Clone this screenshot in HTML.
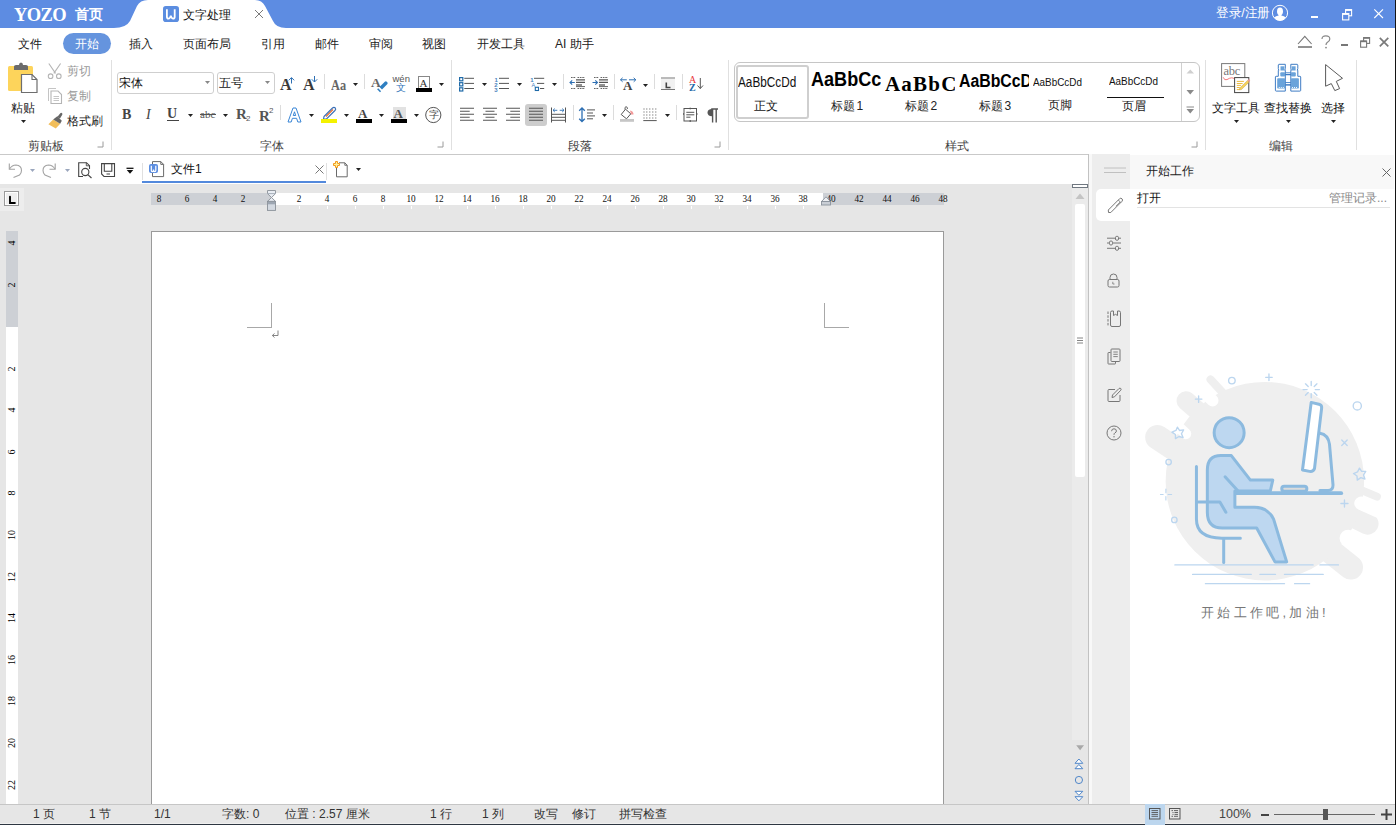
<!DOCTYPE html>
<html><head><meta charset="utf-8">
<style>
*{box-sizing:border-box}
html,body{margin:0;padding:0;width:1396px;height:825px;overflow:hidden;background:#fff;font-family:"Liberation Sans",sans-serif;font-size:12px;color:#222}
.a{position:absolute}
.t{position:absolute;white-space:nowrap;line-height:1}
svg{position:absolute;overflow:visible}
.st{top:808px;font-size:12px;color:#333}
.rn{top:194px;width:20px;text-align:center;font-family:"Liberation Serif",serif;font-size:10px;color:#111;transform:scaleX(0.92)}
.vn{left:2px;width:20px;text-align:center;font-family:"Liberation Serif",serif;font-size:10px;color:#000;transform:rotate(-90deg);height:20px;line-height:20px}
</style></head><body>
<!-- TITLE BAR -->
<div class="a" style="left:0;top:0;width:1396px;height:28px;background:#5d8ce2"></div>
<svg style="left:0;top:0" width="400" height="28"><path d="M114 28 Q126 28 130 21 L137 6 Q140 0 148 0 L255 0 Q262 0 265 6 L273 21 Q276 28 286 28 Z" fill="#fff"/></svg>
<div class="t" style="left:14px;top:6px;font-family:'Liberation Serif',serif;font-weight:bold;font-size:18.5px;color:#fff;letter-spacing:-0.6px">YOZO</div>
<div class="t" style="left:75px;top:7px;font-size:14px;color:#fff;font-weight:bold">首页</div>
<svg style="left:163px;top:6px" width="16" height="16"><rect x="0" y="0" width="16" height="16" rx="2.8" fill="#5b8de0"/><path d="M3.9 3.2 V10.8 Q3.9 12.7 5.5 12.7 Q7 12.7 7.8 9.6 Q8.6 12.7 10.1 12.7 Q11.7 12.7 11.7 10.8 V3.2" fill="none" stroke="#fff" stroke-width="1.8"/></svg>
<div class="t" style="left:182.5px;top:9px;font-size:12px;color:#111">文字处理</div>
<svg style="left:255px;top:10px" width="9" height="9"><path d="M0 0L8 8M8 0L0 8" stroke="#7a7a7a" stroke-width="1"/></svg>
<div class="t" style="left:1215.5px;top:6px;font-size:13px;color:#fff;transform:scaleX(0.97);transform-origin:0 0">登录/注册</div>
<svg style="left:1272px;top:5px" width="16" height="16"><circle cx="8" cy="7.9" r="7.6" fill="none" stroke="#fff" stroke-width="1"/><ellipse cx="8" cy="6.3" rx="3" ry="3.9" fill="#fff"/><path d="M2 12.6 Q4 11 6.6 10.6 L6.6 8.5 H9.4 V10.6 Q12 11 14 12.6 Q11.6 15.6 8 15.6 Q4.4 15.6 2 12.6Z" fill="#fff"/></svg>
<div class="a" style="left:1311px;top:16px;width:7.2px;height:2px;background:#fff"></div>
<svg style="left:1342px;top:9px" width="11" height="12"><rect x="3.6" y="0.6" width="6" height="6.2" fill="none" stroke="#fff" stroke-width="1.1"/><path d="M3.6 1.1H9.6" stroke="#fff" stroke-width="1.6"/><rect x="0.6" y="4.6" width="6.2" height="6.3" fill="#5d8ce2" stroke="#fff" stroke-width="1.1"/><path d="M0.6 5.1H6.8" stroke="#fff" stroke-width="1.6"/></svg>
<svg style="left:1374px;top:9px" width="10" height="10"><path d="M0.3 0.3L9 9M9 0.3L0.3 9" stroke="#fff" stroke-width="1.1"/></svg>

<!-- MENU -->
<div class="a" style="left:63px;top:33px;width:48px;height:21px;background:#6594de;border-radius:11px"></div>
<div class="t" style="left:18px;top:37.5px">文件</div>
<div class="t" style="left:75px;top:37.5px;color:#fff">开始</div>
<div class="t" style="left:129px;top:37.5px">插入</div>
<div class="t" style="left:183px;top:37.5px">页面布局</div>
<div class="t" style="left:261px;top:37.5px">引用</div>
<div class="t" style="left:315px;top:37.5px">邮件</div>
<div class="t" style="left:369px;top:37.5px">审阅</div>
<div class="t" style="left:422px;top:37.5px">视图</div>
<div class="t" style="left:477px;top:37.5px">开发工具</div>
<div class="t" style="left:555px;top:37.5px">AI 助手</div>


<!-- CLIPBOARD GROUP -->
<svg style="left:8px;top:62px" width="32" height="32">
 <rect x="0" y="4" width="25" height="25" rx="1.5" fill="#fdd45b"/>
 <path d="M6 8 V4.5 Q6 3 8 3 H11 Q11 0.5 13 0.5 Q15 0.5 15 3 H18 Q20 3 20 4.5 V8Z" fill="#6b6b6b"/>
 <path d="M13.5 12.5 H24 L29 17.5 V30.5 H13.5Z" fill="#fff" stroke="#6e6e6e" stroke-width="1.2"/>
 <path d="M24 12.5 V17.5 H29" fill="none" stroke="#6e6e6e" stroke-width="1.1"/>
</svg>
<div class="t" style="left:11px;top:102px;font-size:12px">粘贴</div>
<svg style="left:21px;top:120px" width="6" height="4"><path d="M0 0H5L2.5 3Z" fill="#222"/></svg>
<svg style="left:48px;top:63px" width="15" height="16">
 <path d="M0.8 0.5 L7.6 10.4 M12.6 0.5 L5.8 10.4" stroke="#b5b5b5" stroke-width="1.1" fill="none"/>
 <circle cx="2.6" cy="13.2" r="2.3" fill="none" stroke="#b5b5b5" stroke-width="1.1"/>
 <circle cx="10.8" cy="13.2" r="2.3" fill="none" stroke="#b5b5b5" stroke-width="1.1"/>
</svg>
<div class="t" style="left:67px;top:65px;color:#9a9a9a">剪切</div>
<svg style="left:48px;top:88px" width="15" height="16">
 <path d="M0.5 13 V0.5 H8" fill="none" stroke="#c4c4c4" stroke-width="1"/>
 <path d="M3 3 H10 L13.5 6.5 V15.5 H3Z" fill="#fff" stroke="#b5b5b5" stroke-width="1.1"/>
 <path d="M5.5 8.5H11 M5.5 10.5H11 M5.5 12.5H11" stroke="#c0c0c0" stroke-width="0.9"/>
</svg>
<div class="t" style="left:67px;top:90px;color:#9a9a9a">复制</div>
<svg style="left:48px;top:112px" width="16" height="18">
 <path d="M0.4 12.2 L5.2 7.4 L12.2 11.8 L7.8 16.6 Z" fill="#f2be5a"/>
 <path d="M5.2 7.4 L9.3 4.3 L13.8 8.8 L12.2 11.8 Z" fill="#666"/>
 <path d="M9.3 5 L12.3 1.2 Q13.3 0.4 14.1 1.2 Q14.8 2 14.1 2.9 L12 6.6 Z" fill="#666"/>
</svg>
<div class="t" style="left:67px;top:115px;color:#222">格式刷</div>
<div class="t" style="left:28px;top:140px;color:#444">剪贴板</div>
<svg style="left:97px;top:141px" width="7" height="7"><path d="M6 0.5V6H0.5" fill="none" stroke="#9a9a9a" stroke-width="1"/></svg>
<div class="a" style="left:111px;top:60px;width:1px;height:90px;background:#e0e0e0"></div>

<!-- FONT GROUP -->
<div class="a" style="left:117px;top:72px;width:97px;height:22px;border:1px solid #cfcfcf;border-radius:3px;background:#fff"></div>
<div class="t" style="left:119px;top:77px;color:#111">宋体</div>
<svg style="left:205px;top:81px" width="6" height="4"><path d="M0 0H5L2.5 3Z" fill="#888"/></svg>
<div class="a" style="left:217px;top:72px;width:58px;height:22px;border:1px solid #cfcfcf;border-radius:3px;background:#fff"></div>
<div class="t" style="left:219px;top:77px;color:#111">五号</div>
<svg style="left:265px;top:81px" width="6" height="4"><path d="M0 0H5L2.5 3Z" fill="#888"/></svg>

<div class="t" style="left:280px;top:77.3px;font-family:'Liberation Serif',serif;font-weight:bold;font-size:16px;color:#3a3a3a">A</div>
<svg style="left:288px;top:76.5px" width="8" height="8"><path d="M3.5 6.5V0.8 M0.8 3.3L3.5 0.6L6.2 3.3" fill="none" stroke="#2d6fb3" stroke-width="1"/></svg>
<div class="t" style="left:303px;top:77.3px;font-family:'Liberation Serif',serif;font-weight:bold;font-size:16px;color:#3a3a3a">A</div>
<svg style="left:311px;top:76px" width="8" height="8"><path d="M3.5 0V5.8 M0.8 3.3L3.5 6L6.2 3.3" fill="none" stroke="#2d6fb3" stroke-width="1"/></svg>
<div class="a" style="left:324px;top:74px;width:1px;height:15px;background:#dcdcdc"></div>
<div class="t" style="left:331px;top:77.5px;font-family:'Liberation Serif',serif;font-weight:bold;font-size:14.5px;color:#666;transform:scaleX(0.85);transform-origin:0 0">Aa</div>
<svg style="left:353px;top:83px" width="6" height="4"><path d="M0 0H5L2.5 3Z" fill="#222"/></svg>
<div class="a" style="left:364px;top:74px;width:1px;height:15px;background:#dcdcdc"></div>
<div class="t" style="left:371px;top:76px;font-family:'Liberation Serif',serif;font-weight:bold;font-size:13.5px;color:#666">A</div>
<svg style="left:375px;top:79px" width="13" height="13"><path d="M4.5 8 L9.8 2.7 Q10.8 1.7 11.8 2.7 L12.3 3.2 Q13.2 4.2 12.2 5.2 L7 10.4Z" fill="#2f7fc1"/><path d="M3.2 9.3 L6.1 12.2 L5 13.2 L2.1 10.3Z" fill="#2f7fc1"/></svg>
<div class="t" style="left:392.5px;top:74.3px;font-size:9.5px;color:#555">wén</div>
<div class="t" style="left:396px;top:82.8px;font-size:10px;color:#2f73b8">文</div>
<div class="a" style="left:418px;top:76px;width:12px;height:13px;border:1px solid #888"></div>
<div class="t" style="left:419.5px;top:78px;font-family:'Liberation Serif',serif;font-size:11px;color:#333">A</div>
<div class="a" style="left:415.5px;top:88px;width:16px;height:4px;background:#000"></div>
<svg style="left:439px;top:83px" width="6" height="4"><path d="M0 0H5L2.5 3Z" fill="#222"/></svg>

<div class="t" style="left:122px;top:108px;font-family:'Liberation Serif',serif;font-weight:bold;font-size:14px;color:#444">B</div>
<div class="t" style="left:146px;top:108px;font-family:'Liberation Serif',serif;font-style:italic;font-size:14px;color:#444">I</div>
<div class="t" style="left:167px;top:107px;font-family:'Liberation Serif',serif;font-weight:bold;font-size:14px;color:#444">U</div>
<div class="a" style="left:166.5px;top:120px;width:12px;height:1px;background:#444"></div>
<svg style="left:188px;top:114px" width="6" height="4"><path d="M0 0H5L2.5 3Z" fill="#222"/></svg>
<div class="t" style="left:200px;top:109px;font-family:'Liberation Serif',serif;font-size:11px;color:#555">abc</div>
<div class="a" style="left:200px;top:114px;width:16px;height:1px;background:#555"></div>
<svg style="left:223px;top:114px" width="6" height="4"><path d="M0 0H5L2.5 3Z" fill="#222"/></svg>
<div class="t" style="left:236px;top:107px;font-family:'Liberation Serif',serif;font-weight:bold;font-size:15px;color:#555">R</div>
<div class="t" style="left:246px;top:115px;font-family:'Liberation Sans',sans-serif;font-size:8px;color:#555">2</div>
<div class="t" style="left:259px;top:109px;font-family:'Liberation Serif',serif;font-weight:bold;font-size:15px;color:#555">R</div>
<div class="t" style="left:269px;top:107px;font-family:'Liberation Sans',sans-serif;font-size:8px;color:#555">2</div>
<div class="a" style="left:280px;top:105px;width:1px;height:15px;background:#dcdcdc"></div>

<svg style="left:287px;top:107px" width="15" height="16"><path d="M1 15 L6 1 H9 L14 15 H10.8 L9.6 11.3 H5.4 L4.2 15Z M6.3 8.5 H8.7 L7.5 4.8Z" fill="#fff" stroke="#3a86d6" stroke-width="1"/></svg>
<svg style="left:309px;top:114px" width="6" height="4"><path d="M0 0H5L2.5 3Z" fill="#222"/></svg>
<svg style="left:321px;top:106px" width="16" height="17">
 <path d="M3 10.5 L11.5 2 Q13 0.8 14.3 2 Q15.3 3.2 14 4.5 L5.5 13 H2.5Z" fill="#fff" stroke="#3a6fb6" stroke-width="1.1"/>
 <path d="M5 10.5 L12 3.5" stroke="#e0703a" stroke-width="1.3"/>
 <rect x="0" y="13" width="16" height="4" fill="#f4f200"/>
</svg>
<svg style="left:344px;top:114px" width="6" height="4"><path d="M0 0H5L2.5 3Z" fill="#222"/></svg>
<div class="t" style="left:358px;top:107px;font-family:'Liberation Serif',serif;font-weight:bold;font-size:13px;color:#444">A</div>
<div class="a" style="left:356px;top:119px;width:16px;height:4px;background:#000"></div>
<svg style="left:379px;top:114px" width="6" height="4"><path d="M0 0H5L2.5 3Z" fill="#222"/></svg>
<div class="a" style="left:393px;top:107px;width:13px;height:12px;background:#e2e2e2"></div>
<div class="t" style="left:393.5px;top:107px;font-family:'Liberation Serif',serif;font-weight:bold;font-size:13px;color:#555">A</div>
<div class="a" style="left:391px;top:119px;width:16px;height:4px;background:#000"></div>
<svg style="left:414px;top:114px" width="6" height="4"><path d="M0 0H5L2.5 3Z" fill="#222"/></svg>
<svg style="left:425px;top:107px" width="17" height="17"><circle cx="8.3" cy="8" r="7.6" fill="none" stroke="#555" stroke-width="1"/></svg>
<div class="t" style="left:429px;top:110px;font-size:10px;color:#444">字</div>
<div class="t" style="left:260px;top:140px;color:#444">字体</div>
<svg style="left:437px;top:141px" width="7" height="7"><path d="M6 0.5V6H0.5" fill="none" stroke="#9a9a9a" stroke-width="1"/></svg>
<div class="a" style="left:451px;top:60px;width:1px;height:90px;background:#e0e0e0"></div>


<!-- PARAGRAPH GROUP -->
<svg style="left:459px;top:77px" width="16" height="15">
 <rect x="0.6" y="0.6" width="3.2" height="3.2" fill="none" stroke="#1f6aa8" stroke-width="1.2"/>
 <rect x="0.6" y="5.7" width="3.2" height="3.2" fill="none" stroke="#1f6aa8" stroke-width="1.2"/>
 <rect x="0.6" y="10.8" width="3.2" height="3.2" fill="none" stroke="#1f6aa8" stroke-width="1.2"/>
 <path d="M5.3 1.3H15 M5.3 6.4H15 M5.3 11.5H15" stroke="#555" stroke-width="1"/>
</svg>
<svg style="left:482px;top:83px" width="6" height="4"><path d="M0 0H5L2.5 3Z" fill="#222"/></svg>
<svg style="left:494px;top:76px" width="16" height="16">
 <text x="0.5" y="5.5" font-size="6" font-family="Liberation Sans" font-weight="bold" fill="#4a84bd">1</text>
 <text x="0.3" y="10.6" font-size="6" font-family="Liberation Sans" font-weight="bold" fill="#4a84bd">2</text>
 <text x="0.3" y="15.7" font-size="6" font-family="Liberation Sans" font-weight="bold" fill="#4a84bd">3</text>
 <path d="M5 2.3H15 M5 7.4H15 M5 12.5H15" stroke="#555" stroke-width="1"/>
</svg>
<svg style="left:517px;top:83px" width="6" height="4"><path d="M0 0H5L2.5 3Z" fill="#222"/></svg>
<svg style="left:530px;top:76px" width="16" height="16">
 <text x="0.3" y="5.5" font-size="6" font-family="Liberation Sans" font-weight="bold" fill="#4a84bd">1</text>
 <text x="1.6" y="10.6" font-size="5.5" font-family="Liberation Sans" fill="#4a84bd">A</text>
 <rect x="5.3" y="11.3" width="3.2" height="3.2" fill="none" stroke="#1f6aa8" stroke-width="1.1"/>
 <path d="M4 2.3H14.2 M7 7.4H14.2 M10 12.5H14.2" stroke="#555" stroke-width="1"/>
</svg>
<svg style="left:552px;top:83px" width="6" height="4"><path d="M0 0H5L2.5 3Z" fill="#222"/></svg><div class="a" style="left:563px;top:74px;width:1px;height:15px;background:#dcdcdc"></div>
<svg style="left:569px;top:76px" width="17" height="15">
 <path d="M2 1.5H7 M8.5 1.5H16 M2 12.5H7 M8.5 12.5H16" stroke="#555" stroke-width="0.9" stroke-dasharray="1.6 0.8"/>
 <path d="M7 3.8H16 M7 6.4H16" stroke="#555" stroke-width="1.3"/>
 <path d="M7 9H13" stroke="#555" stroke-width="1.3"/>
 <path d="M7 10.6H16" stroke="#555" stroke-width="0.9"/>
 <path d="M5.8 6.5H1 M3.2 4.3L1 6.5L3.2 8.7" fill="none" stroke="#2d6fb3" stroke-width="1.1"/>
</svg>
<svg style="left:592px;top:76px" width="17" height="15">
 <path d="M2 1.5H7 M8.5 1.5H16 M2 12.5H7 M8.5 12.5H16" stroke="#555" stroke-width="0.9" stroke-dasharray="1.6 0.8"/>
 <path d="M7 3.8H16 M7 6.4H16" stroke="#555" stroke-width="1.3"/>
 <path d="M7 9H13" stroke="#555" stroke-width="1.3"/>
 <path d="M7 10.6H16" stroke="#555" stroke-width="0.9"/>
 <path d="M0.5 6.5H5.5 M3.3 4.3L5.5 6.5L3.3 8.7" fill="none" stroke="#2d6fb3" stroke-width="1.1"/>
</svg>
<div class="a" style="left:614px;top:74px;width:1px;height:15px;background:#dcdcdc"></div>
<svg style="left:620px;top:77px" width="17" height="6"><path d="M0.5 2.8H6.8 M2.6 0.8L0.5 2.8L2.6 4.8 M9 2.8H15.8 M13.7 0.8L15.8 2.8L13.7 4.8" fill="none" stroke="#2d6fb3" stroke-width="1"/></svg>
<div class="t" style="left:623px;top:79px;font-family:'Liberation Serif',serif;font-weight:bold;font-size:13px;color:#444">A</div>
<svg style="left:643px;top:84px" width="6" height="4"><path d="M0 0H5L2.5 3Z" fill="#222"/></svg><div class="a" style="left:654px;top:74px;width:1px;height:15px;background:#dcdcdc"></div>
<svg style="left:660px;top:77px" width="16" height="14">
 <rect x="1" y="2" width="14" height="10" fill="#f1f1f1"/>
 <path d="M1 1H15 M1 12.5H15" stroke="#777" stroke-width="1"/>
 <path d="M6.3 5.5V10.5H10.5" fill="none" stroke="#444" stroke-width="1.6"/>
</svg>
<div class="a" style="left:682px;top:74px;width:1px;height:15px;background:#dcdcdc"></div>
<div class="t" style="left:689px;top:75px;font-family:'Liberation Serif',serif;font-size:10px;color:#e8343c">A</div>
<div class="t" style="left:689px;top:83px;font-family:'Liberation Serif',serif;font-weight:bold;font-size:10px;color:#2566a8">Z</div>
<svg style="left:697px;top:78px" width="7" height="12"><path d="M3.3 0V10.5 M0.5 7.5L3.3 10.5L6 7.5" fill="none" stroke="#555" stroke-width="1"/></svg>

<svg style="left:459px;top:107px" width="16" height="15"><path d="M1 1.3H15 M1 4.3H10.7 M1 7.3H15 M1 10.3H10.7 M1 13.3H15" stroke="#555" stroke-width="1.1"/></svg>
<svg style="left:482px;top:107px" width="16" height="15"><path d="M1 1.3H15 M3.5 4.3H12.5 M1 7.3H15 M3.5 10.3H12.5 M1 13.3H15" stroke="#555" stroke-width="1.1"/></svg>
<svg style="left:505px;top:107px" width="16" height="15"><path d="M1 1.3H15 M5.3 4.3H15 M1 7.3H15 M5.3 10.3H15 M1 13.3H15" stroke="#555" stroke-width="1.1"/></svg>
<div class="a" style="left:525px;top:104px;width:22px;height:21.5px;background:#cdcdcd;border-radius:3px"></div>
<svg style="left:528px;top:107px" width="16" height="15"><path d="M1 1.3H15 M1 4.3H15 M1 7.3H15 M1 10.3H15 M1 13.3H15" stroke="#555" stroke-width="1.1"/></svg>
<svg style="left:550px;top:107px" width="17" height="17">
 <path d="M1.5 0.5V15.5 M15.5 0.5V15.5" stroke="#555" stroke-width="1"/>
 <path d="M1.5 7.3H15.5 M1.5 10.3H15.5 M1.5 13.3H15.5" stroke="#555" stroke-width="1"/>
 <path d="M3 3.3H7.3 M4.8 1.6L3 3.3L4.8 5 M9.7 3.3H14 M12.2 1.6L14 3.3L12.2 5" fill="none" stroke="#2d6fb3" stroke-width="0.9"/>
</svg>
<div class="a" style="left:573px;top:105px;width:1px;height:15px;background:#dcdcdc"></div>
<svg style="left:578px;top:107px" width="18" height="16">
 <path d="M4 1V14.5 M1.2 3.8L4 1L6.8 3.8 M1.2 11.7L4 14.5L6.8 11.7" fill="none" stroke="#2d6fb3" stroke-width="1.3"/>
 <path d="M9 2.9H17 M9 6H15 M9 8.9H17 M9 11.8H15" stroke="#555" stroke-width="1"/>
</svg>
<svg style="left:602px;top:114px" width="6" height="4"><path d="M0 0H5L2.5 3Z" fill="#222"/></svg><div class="a" style="left:613px;top:105px;width:1px;height:15px;background:#dcdcdc"></div>
<svg style="left:620px;top:106px" width="15" height="16">
 <path d="M5 3.5 Q4.5 0.8 6 0.7 Q7.5 0.6 7.5 3" fill="none" stroke="#555" stroke-width="0.9"/>
 <path d="M1.2 8.5 L5.5 3.2 L10.8 7.8 L6.5 12.8Z" fill="#fff" stroke="#555" stroke-width="1"/>
 <path d="M10 4.5 Q13.5 5 13.5 8.5 L11 8.5Z" fill="#f39a9a"/>
 <rect x="0" y="13" width="14" height="2.8" fill="#c6c6c6"/>
</svg>
<svg style="left:643px;top:108px" width="14" height="14"><rect x="0.5" y="0.5" width="1" height="1" fill="#555"/><rect x="3.3" y="0.5" width="1" height="1" fill="#555"/><rect x="6.3" y="0.5" width="1" height="1" fill="#555"/><rect x="9.3" y="0.5" width="1" height="1" fill="#555"/><rect x="12.3" y="0.5" width="1" height="1" fill="#555"/><rect x="0.5" y="3.5" width="1" height="1" fill="#555"/><rect x="3.3" y="3.5" width="1" height="1" fill="#555"/><rect x="6.3" y="3.5" width="1" height="1" fill="#555"/><rect x="9.3" y="3.5" width="1" height="1" fill="#555"/><rect x="12.3" y="3.5" width="1" height="1" fill="#555"/><rect x="0.5" y="6.5" width="1" height="1" fill="#555"/><rect x="3.3" y="6.5" width="1" height="1" fill="#555"/><rect x="6.3" y="6.5" width="1" height="1" fill="#555"/><rect x="9.3" y="6.5" width="1" height="1" fill="#555"/><rect x="12.3" y="6.5" width="1" height="1" fill="#555"/><rect x="0.5" y="9.5" width="1" height="1" fill="#555"/><rect x="3.3" y="9.5" width="1" height="1" fill="#555"/><rect x="6.3" y="9.5" width="1" height="1" fill="#555"/><rect x="9.3" y="9.5" width="1" height="1" fill="#555"/><rect x="12.3" y="9.5" width="1" height="1" fill="#555"/><path d="M0.3 12.6H13.7" stroke="#555" stroke-width="1"/></svg>
<svg style="left:665px;top:114px" width="6" height="4"><path d="M0 0H5L2.5 3Z" fill="#222"/></svg><div class="a" style="left:676px;top:105px;width:1px;height:15px;background:#dcdcdc"></div>
<svg style="left:683px;top:107px" width="15" height="16">
 <rect x="1" y="1.5" width="12.5" height="12.5" fill="none" stroke="#555" stroke-width="1"/>
 <path d="M3.3 5.3H11.3 M3.3 7.8H11.3 M3.3 10.2H7.5" stroke="#555" stroke-width="1"/>
 <path d="M6.5 1.5H8 M6.5 14H8 M0 7H1 M13.5 7H14.5" stroke="#555" stroke-width="1.4"/>
</svg>
<svg style="left:707px;top:108px" width="12" height="15"><path d="M5 1 Q0.5 1 0.5 4.6 Q0.5 8.3 5 8.3Z" fill="#555"/><path d="M4.2 1H11 M5.6 1V14.5 M9.2 1V14.5" stroke="#555" stroke-width="1.4" fill="none"/></svg>
<div class="t" style="left:568px;top:140px;color:#444">段落</div>
<svg style="left:714px;top:141px" width="7" height="7"><path d="M6 0.5V6H0.5" fill="none" stroke="#9a9a9a" stroke-width="1"/></svg>
<div class="a" style="left:728px;top:60px;width:1px;height:90px;background:#e0e0e0"></div>


<!-- STYLES GROUP -->
<div class="a" style="left:733.5px;top:62px;width:466px;height:60px;border:1px solid #c6c6c6;border-radius:6px;background:#fff"></div>
<div class="a" style="left:736px;top:65px;width:73px;height:54px;border:2px solid #cfcfcf;border-radius:3px"></div>
<div class="t" style="left:737.5px;top:75px;font-size:14px;color:#111;transform:scaleX(0.84);transform-origin:0 0">AaBbCcDd</div>
<div class="t" style="left:754px;top:99.5px;color:#111">正文</div>
<div class="a" style="left:810px;top:64px;width:71px;height:40px;overflow:hidden">
<div class="t" style="left:1px;top:4px;font-size:21px;font-weight:bold;color:#000;transform:scaleX(0.86);transform-origin:0 0">AaBbCc</div></div>
<div class="t" style="left:831px;top:99.5px;color:#222">标题<span style="margin-left:1.5px">1</span></div>
<div class="a" style="left:884px;top:64px;width:71px;height:40px;overflow:hidden">
<div class="t" style="left:1px;top:10px;font-size:21px;font-family:'Liberation Serif',serif;font-weight:bold;color:#000;letter-spacing:1.2px">AaBbCc</div></div>
<div class="t" style="left:905px;top:99.5px;color:#222">标题<span style="margin-left:1.5px">2</span></div>
<div class="a" style="left:958px;top:64px;width:71px;height:40px;overflow:hidden">
<div class="t" style="left:1px;top:7.8px;font-size:18px;font-weight:bold;color:#000;transform:scaleX(0.88);transform-origin:0 0">AaBbCcDd</div></div>
<div class="t" style="left:979px;top:99.5px;color:#222">标题<span style="margin-left:1.5px">3</span></div>
<div class="t" style="left:1032.5px;top:77px;font-size:11.5px;color:#111;transform:scaleX(0.86);transform-origin:0 0">AaBbCcDd</div>
<div class="t" style="left:1048px;top:99px;color:#222">页脚</div>
<div class="t" style="left:1109px;top:76px;font-size:11.5px;color:#111;transform:scaleX(0.86);transform-origin:0 0">AaBbCcDd</div>
<div class="a" style="left:1107px;top:96.5px;width:57px;height:1.5px;background:#111"></div>
<div class="t" style="left:1122px;top:100px;color:#222">页眉</div>
<div class="a" style="left:1181px;top:63px;width:1px;height:58px;background:#d0d0d0"></div>
<svg style="left:1186px;top:69px" width="9" height="46">
 <path d="M0.5 4.5H8L4.25 0.5Z" fill="#cfcfcf"/>
 <path d="M0.5 21H8L4.25 25.5Z" fill="#8a8a8a"/>
 <path d="M0.5 38H8" stroke="#8a8a8a" stroke-width="1"/>
 <path d="M0.5 40H8L4.25 44.5Z" fill="#8a8a8a"/>
</svg>
<div class="t" style="left:945px;top:140px;color:#444">样式</div>
<svg style="left:1191px;top:141px" width="7" height="7"><path d="M6 0.5V6H0.5" fill="none" stroke="#9a9a9a" stroke-width="1"/></svg>
<div class="a" style="left:1205px;top:60px;width:1px;height:90px;background:#e0e0e0"></div>

<!-- EDIT GROUP -->
<svg style="left:1221px;top:63px" width="30" height="31">
 <rect x="0.6" y="0.6" width="23.2" height="22.8" fill="#fff" stroke="#7a7a7a" stroke-width="1"/>
 <text x="2.6" y="11.8" style="font-family:'Liberation Serif',serif;font-size:12.5px;letter-spacing:-0.3px" fill="#777">abc</text>
 <path d="M2.2 14.3 Q3.5 17.8 6 16.6 Q8.5 15 10.5 14.8 Q12 14.8 13.3 15.6" fill="none" stroke="#f06a6a" stroke-width="0.9"/>
 <rect x="13.6" y="14.6" width="14.2" height="15" fill="#fff" stroke="#444" stroke-width="1"/>
 <path d="M15.8 18.4H22.9 M15.8 20.5H21.6 M15.8 22.4H19.9 M15.8 24.5H18.8 M15.8 26.6H18.8" stroke="#eab32b" stroke-width="0.9"/>
 <path d="M18.5 26.8 L18.8 25 L26.6 17.4 L28.2 19 L20.4 26.6Z" fill="#f7d35a" stroke="#b58a2a" stroke-width="0.4"/>
 <path d="M26.6 17.4 L27.4 16.6 Q28.2 16 28.9 16.8 Q29.4 17.6 28.9 18.3 L28.2 19Z" fill="#ef9a9a"/>
</svg>
<div class="t" style="left:1212px;top:102px;color:#111">文字工具</div>
<svg style="left:1234px;top:120px" width="6" height="4"><path d="M0 0H5L2.5 3Z" fill="#222"/></svg>
<svg style="left:1270px;top:60px" width="36" height="36">
 <path d="M8.8 4.3 H15.3 V8.6 L14.8 10.3 H15.3 V31.1 H6.2 Q5.4 31.1 5.4 30.3 V17 Q5.4 16.3 6.2 16.3 H8.3 V10.3 H8.8 L8.3 8.6 V4.9Z" fill="#fff" stroke="#3f7cc4" stroke-width="1"/>
 <path d="M27.3 4.3 H20.8 V8.6 L21.3 10.3 H20.8 V31.1 H29.9 Q30.7 31.1 30.7 30.3 V17 Q30.7 16.3 29.9 16.3 H27.8 V10.3 H27.3 L27.8 8.6 V4.9Z" fill="#fff" stroke="#3f7cc4" stroke-width="1"/>
 <rect x="15.3" y="12.8" width="5.5" height="2" fill="#fff" stroke="#3f7cc4" stroke-width="0.9"/>
 <rect x="15.3" y="22.6" width="5.5" height="2.4" fill="#fff" stroke="#3f7cc4" stroke-width="0.9"/>
 <path d="M15.3 14.5 H20.8 M15.3 24.8 H20.8" stroke="#3f7cc4" stroke-width="1"/>
 <g fill="#6aa3da">
  <rect x="10.5" y="6.3" width="3.9" height="4.2"/>
  <rect x="10.3" y="12.2" width="4.8" height="4.4" rx="1"/>
  <rect x="7.2" y="18.3" width="7.9" height="10.2" rx="0.8"/>
  <rect x="21.7" y="6.3" width="3.9" height="4.2"/>
  <rect x="21" y="12.2" width="4.8" height="4.4" rx="1"/>
  <rect x="21" y="18.3" width="7.9" height="10.2" rx="0.8"/>
 </g>
 <path d="M8.8 27.5H14 M22 27.5H27.5" stroke="#fff" stroke-width="0.9" stroke-dasharray="1 1"/>
</svg>
<div class="t" style="left:1264px;top:102px;color:#111">查找替换</div>
<svg style="left:1286px;top:120px" width="6" height="4"><path d="M0 0H5L2.5 3Z" fill="#222"/></svg>
<svg style="left:1318px;top:60px" width="32" height="36"><path d="M7.6 4.6 V26.2 L13.3 23.6 L16.8 30.6 L21.6 28.6 L18.3 21.4 L24.5 18.3 Z" fill="#fff" stroke="#5a5a5a" stroke-width="1" stroke-linejoin="round"/></svg>
<div class="t" style="left:1321px;top:102px;color:#111">选择</div>
<svg style="left:1331px;top:120px" width="6" height="4"><path d="M0 0H5L2.5 3Z" fill="#222"/></svg>
<div class="t" style="left:1269px;top:140px;color:#444">编辑</div>
<div class="a" style="left:1356px;top:60px;width:1px;height:90px;background:#e0e0e0"></div>

<!-- MENU RIGHT ICONS -->
<svg style="left:1297px;top:35px" width="16" height="14"><path d="M1 9 L7.8 1.4 L14.6 9" fill="none" stroke="#777" stroke-width="1.1"/><path d="M1 12H15" stroke="#777" stroke-width="1.6"/></svg>
<svg style="left:1321px;top:35px" width="10" height="14"><path d="M1 4 Q1 0.8 4.8 0.8 Q8.8 0.8 8.8 4 Q8.8 6 6.5 7.3 Q5 8.2 5 10" fill="none" stroke="#888" stroke-width="1.2"/><circle cx="5" cy="12.6" r="0.9" fill="#888"/></svg>
<div class="a" style="left:1341px;top:44px;width:7px;height:2px;background:#777"></div>
<svg style="left:1360px;top:37px" width="11" height="11"><rect x="3.6" y="0.6" width="6" height="5.8" fill="none" stroke="#777" stroke-width="1.1"/><path d="M3.6 1H9.6" stroke="#777" stroke-width="1.6"/><rect x="0.6" y="4" width="6" height="6.2" fill="#fff" stroke="#777" stroke-width="1.1"/><path d="M0.6 4.4H6.6" stroke="#777" stroke-width="1.6"/></svg>
<svg style="left:1379px;top:36.5px" width="11" height="11"><path d="M0.8 0.8L9.3 9.3M9.3 0.8L0.8 9.3" stroke="#7a7a7a" stroke-width="1.7"/></svg>

<!-- RIBBON BORDER -->
<div class="a" style="left:0;top:154px;width:1396px;height:1px;background:#c9c9c9"></div>


<!-- DOC TAB BAR -->
<svg style="left:8px;top:162px" width="15" height="16"><path d="M1.3 1.5V7.3H7" fill="none" stroke="#a3a3a3" stroke-width="1.1"/><path d="M1.5 7 Q4 3 8 3 Q13.5 3.3 13.5 8.5 Q13.5 11 11.5 13 L5.5 15.5" fill="none" stroke="#a3a3a3" stroke-width="1.1"/></svg>
<svg style="left:30px;top:169px" width="6" height="4"><path d="M0 0H5L2.5 3Z" fill="#9aa6bd"/></svg>
<svg style="left:42px;top:162px" width="15" height="16"><path d="M13.2 1.5V7.3H7.5" fill="none" stroke="#a3a3a3" stroke-width="1.1"/><path d="M13 7 Q10.5 3 6.5 3 Q1 3.3 1 8.5 Q1 11 3 13 L9 15.5" fill="none" stroke="#a3a3a3" stroke-width="1.1"/></svg>
<svg style="left:65px;top:169px" width="6" height="4"><path d="M0 0H5L2.5 3Z" fill="#9aa6bd"/></svg>
<svg style="left:78px;top:162px" width="15" height="17">
 <path d="M5 14.5H0.7V0.7H8.5L11.5 3.7V7" fill="none" stroke="#444" stroke-width="1.1"/>
 <path d="M8.3 0.7V3.8H11.5" fill="none" stroke="#444" stroke-width="0.9"/>
 <circle cx="7.3" cy="10" r="3.6" fill="none" stroke="#444" stroke-width="1.1"/>
 <path d="M9.8 12.6L13.5 16" stroke="#444" stroke-width="1.2"/>
</svg>
<svg style="left:101px;top:163px" width="15" height="14">
 <path d="M0.6 0.6H13.5V13.5H3L0.6 11Z" fill="none" stroke="#444" stroke-width="1.1"/>
 <path d="M3.3 0.6V8.3H10.8V0.6" fill="none" stroke="#444" stroke-width="1.1"/>
 <path d="M5.5 11H9" stroke="#444" stroke-width="1"/>
</svg>
<svg style="left:126px;top:167px" width="8" height="7"><path d="M0.5 1.3H7.5" stroke="#111" stroke-width="1.3"/><path d="M0.8 3H7.2L4 6.8Z" fill="#111"/></svg>
<div class="a" style="left:142px;top:163px;width:1px;height:17px;background:#e0e0e0"></div>
<div class="a" style="left:142px;top:180.5px;width:184px;height:2px;background:#5389dc"></div>
<svg style="left:149px;top:161px" width="16" height="16">
 <path d="M3.5 0.6 H11.8 L14.6 3.4 V15.6 H3.5 Z" fill="#fff" stroke="#6a6a6a" stroke-width="1"/>
 <path d="M11.8 0.6 V3.4 H14.6" fill="none" stroke="#6a6a6a" stroke-width="1"/>
 <rect x="0" y="3" width="9" height="9" rx="2" fill="#5b8de0"/>
 <path d="M2.3 4.8 V9.2 Q2.3 10.7 3.4 10.7 Q4.4 10.7 4.55 8.6 Q4.7 10.7 5.7 10.7 Q6.8 10.7 6.8 9.2 V4.8" fill="none" stroke="#fff" stroke-width="1.2"/>
</svg>
<div class="t" style="left:171px;top:163px;font-size:12px;color:#111">文件1</div>
<svg style="left:315px;top:165px" width="9" height="9"><path d="M0.5 0.5L8.5 8.5M8.5 0.5L0.5 8.5" stroke="#777" stroke-width="1"/></svg>
<div class="a" style="left:326px;top:163px;width:1px;height:17px;background:#e0e0e0"></div>
<svg style="left:333px;top:161px" width="16" height="17">
 <path d="M3.5 6V15.8H14.2V4.3L11.8 1.8H6" fill="none" stroke="#6a6a6a" stroke-width="1"/>
 <path d="M11.8 1.8V4.3H14.2" fill="none" stroke="#6a6a6a" stroke-width="0.9"/>
 <path d="M2.5 0.5H4.5V2.5H6.5V4.5H4.5V6.5H2.5V4.5H0.5V2.5H2.5Z" fill="#fff3a0" stroke="#f39a1e" stroke-width="1"/>
</svg>
<svg style="left:356px;top:168px" width="6" height="4"><path d="M0 0H5L2.5 3Z" fill="#222"/></svg>

<!-- MAIN GRAY -->
<div class="a" style="left:0;top:184px;width:1088px;height:620px;background:#e6e6e6"></div>
<div class="a" style="left:0;top:187.5px;width:24px;height:23.5px;background:#ededed"></div>
<div class="a" style="left:4px;top:191px;width:15px;height:15px;border:1px solid #9a9a9a;background:#efefef;box-shadow:inset 0 0 0 1px #fff"></div>
<svg style="left:9px;top:196px" width="7" height="9"><path d="M1 0.8V7H5.9" fill="none" stroke="#000" stroke-width="1.9" stroke-linecap="round"/></svg>
<div class="a" style="left:151px;top:193px;width:793px;height:12px;background:#cdd0d5"></div>
<div class="a" style="left:271px;top:193px;width:552px;height:12px;background:#fff"></div>
<div class="a" style="left:299px;top:206px;width:1px;height:2.6px;background:#fff"></div><div class="a" style="left:327px;top:206px;width:1px;height:2.6px;background:#fff"></div><div class="a" style="left:355px;top:206px;width:1px;height:2.6px;background:#fff"></div><div class="a" style="left:383px;top:206px;width:1px;height:2.6px;background:#fff"></div><div class="a" style="left:411px;top:206px;width:1px;height:2.6px;background:#fff"></div><div class="a" style="left:439px;top:206px;width:1px;height:2.6px;background:#fff"></div><div class="a" style="left:467px;top:206px;width:1px;height:2.6px;background:#fff"></div><div class="a" style="left:495px;top:206px;width:1px;height:2.6px;background:#fff"></div><div class="a" style="left:523px;top:206px;width:1px;height:2.6px;background:#fff"></div><div class="a" style="left:551px;top:206px;width:1px;height:2.6px;background:#fff"></div><div class="a" style="left:579px;top:206px;width:1px;height:2.6px;background:#fff"></div><div class="a" style="left:607px;top:206px;width:1px;height:2.6px;background:#fff"></div><div class="a" style="left:635px;top:206px;width:1px;height:2.6px;background:#fff"></div><div class="a" style="left:663px;top:206px;width:1px;height:2.6px;background:#fff"></div><div class="a" style="left:691px;top:206px;width:1px;height:2.6px;background:#fff"></div><div class="a" style="left:719px;top:206px;width:1px;height:2.6px;background:#fff"></div><div class="a" style="left:747px;top:206px;width:1px;height:2.6px;background:#fff"></div><div class="a" style="left:775px;top:206px;width:1px;height:2.6px;background:#fff"></div><div class="a" style="left:803px;top:206px;width:1px;height:2.6px;background:#fff"></div><div class="t rn" style="left:149px">8</div><div class="t rn" style="left:177px">6</div><div class="t rn" style="left:205px">4</div><div class="t rn" style="left:233px">2</div><div class="t rn" style="left:289px">2</div><div class="t rn" style="left:317px">4</div><div class="t rn" style="left:345px">6</div><div class="t rn" style="left:373px">8</div><div class="t rn" style="left:401px">10</div><div class="t rn" style="left:429px">12</div><div class="t rn" style="left:457px">14</div><div class="t rn" style="left:485px">16</div><div class="t rn" style="left:513px">18</div><div class="t rn" style="left:541px">20</div><div class="t rn" style="left:569px">22</div><div class="t rn" style="left:597px">24</div><div class="t rn" style="left:625px">26</div><div class="t rn" style="left:653px">28</div><div class="t rn" style="left:681px">30</div><div class="t rn" style="left:709px">32</div><div class="t rn" style="left:737px">34</div><div class="t rn" style="left:765px">36</div><div class="t rn" style="left:793px">38</div><div class="t rn" style="left:821px">40</div><div class="t rn" style="left:849px">42</div><div class="t rn" style="left:877px">44</div><div class="t rn" style="left:905px">46</div><div class="t rn" style="left:933px">48</div>
<svg style="left:267px;top:190px" width="9" height="21">
 <path d="M0.5 0.5H8.5V3.6L4.5 7.5L0.5 3.6Z" fill="#e9edf3" stroke="#8a9199" stroke-width="0.9"/>
 <path d="M0.5 3.6H8.5" stroke="#a6afba" stroke-width="1"/>
 <path d="M4.5 7.5L8.5 11.4H0.5Z" fill="#e9edf3" stroke="#8a9199" stroke-width="0.9"/>
 <rect x="0.5" y="11.4" width="8" height="9" fill="#d3d9e1" stroke="#8a9199" stroke-width="0.9"/>
 <rect x="0.9" y="11.9" width="7.2" height="2.4" fill="#9da6b2"/>
</svg>
<svg style="left:821px;top:196px" width="10" height="10">
 <path d="M0.5 5.5L5 0.8L9.5 5.5Z" fill="#eceef1" stroke="#8a929c" stroke-width="0.9"/>
 <rect x="0.5" y="5.5" width="9" height="3.5" fill="#c9ced5" stroke="#8a929c" stroke-width="0.9"/>
</svg>
<div class="a" style="left:6px;top:231px;width:12px;height:96px;background:#cdd0d5"></div>
<div class="a" style="left:6px;top:327px;width:12px;height:477px;background:#fff"></div>
<div class="t vn" style="top:233px">4</div><div class="t vn" style="top:275px">2</div><div class="t vn" style="top:358.6px">2</div><div class="t vn" style="top:400.2px">4</div><div class="t vn" style="top:441.8px">6</div><div class="t vn" style="top:483.4px">8</div><div class="t vn" style="top:525.0px">10</div><div class="t vn" style="top:566.6px">12</div><div class="t vn" style="top:608.2px">14</div><div class="t vn" style="top:649.8px">16</div><div class="t vn" style="top:691.4px">18</div><div class="t vn" style="top:733.0px">20</div><div class="t vn" style="top:774.6px">22</div>
<div class="a" style="left:151px;top:231px;width:793px;height:600px;background:#fff;border:1px solid #9a9a9a"></div>
<div class="a" style="left:271px;top:303px;width:1px;height:24px;background:#a8a8a8"></div>
<div class="a" style="left:247px;top:327px;width:25px;height:1px;background:#a8a8a8"></div>
<div class="a" style="left:824px;top:303px;width:1px;height:24px;background:#a8a8a8"></div>
<div class="a" style="left:824px;top:327px;width:25px;height:1px;background:#a8a8a8"></div>
<svg style="left:271px;top:330px" width="9" height="9"><path d="M7 0.5V5.5H1.5 M3.5 3.5L1.3 5.5L3.5 7.5" fill="none" stroke="#777" stroke-width="0.9"/></svg>


<!-- RIGHT PANEL -->
<div class="a" style="left:1072px;top:184px;width:16px;height:556px;background:#ebebeb"></div>
<div class="a" style="left:1072px;top:183.5px;width:16px;height:4.5px;border:1px solid #6f7780;background:#fff"></div>
<svg style="left:1075px;top:193px" width="10" height="7"><path d="M0.5 6H9.5L5 0.5Z" fill="#c4c4c4"/></svg>
<div class="a" style="left:1075px;top:204px;width:10px;height:273px;background:#fff;border-radius:2px"></div>
<svg style="left:1077px;top:337px" width="7" height="7"><path d="M0 1H6 M0 3.5H6 M0 6H6" stroke="#777" stroke-width="0.9"/></svg>
<svg style="left:1076px;top:745px" width="9" height="6"><path d="M0.2 0.2H8L4.1 5.2Z" fill="#a8a8a8"/></svg>
<svg style="left:1074px;top:758px" width="11" height="44">
 <path d="M1 5.3 L4.9 1 L8.8 5.3Z M1 10.7 L4.9 6.5 L8.8 10.7Z" fill="#fff" stroke="#4f86c9" stroke-width="1" stroke-linejoin="round"/>
 <circle cx="4.9" cy="22" r="3.6" fill="none" stroke="#4f86c9" stroke-width="1"/>
 <path d="M1 33.3 H8.8 L4.9 37.3Z M1 38.7 H8.8 L4.9 42.8Z" fill="#fff" stroke="#4f86c9" stroke-width="1" stroke-linejoin="round"/>
</svg>
<div class="a" style="left:1088px;top:154px;width:1px;height:650px;background:#c2c2c2"></div>
<div class="a" style="left:1089px;top:154px;width:3px;height:650px;background:#f8f8f8"></div>
<div class="a" style="left:1092px;top:154px;width:38px;height:650px;background:#ededed"></div>
<div class="a" style="left:1130px;top:154px;width:266px;height:650px;background:#fff"></div>
<div class="a" style="left:1130px;top:155px;width:264px;height:34px;background:#f8f8f8"></div>
<svg style="left:1104px;top:167px" width="22" height="7"><path d="M0 1H22 M0 5.5H22" stroke="#c0c0c0" stroke-width="1"/></svg>
<div class="t" style="left:1146px;top:165px;font-size:12px;color:#222">开始工作</div>
<svg style="left:1382px;top:168px" width="9" height="9"><path d="M0.5 0.5L8.5 8.5M8.5 0.5L0.5 8.5" stroke="#666" stroke-width="1"/></svg>
<div class="a" style="left:1096px;top:189px;width:34px;height:32px;background:#fff;border-radius:5px 0 0 5px"></div>
<div class="t" style="left:1137px;top:192px;font-size:12px;color:#111">打开</div>
<div class="t" style="left:1329px;top:192px;font-size:12px;color:#888">管理记录...</div>
<div class="a" style="left:1137px;top:207px;width:253px;height:1px;background:#e3e3e3"></div>

<svg style="left:1107px;top:197px" width="17" height="17">
 <path d="M1.5 15.5 L1.3 13 L12.5 1.8 Q13.8 0.6 15 1.8 Q16.2 3 15 4.3 L3.8 15.5Z" fill="none" stroke="#777" stroke-width="1"/>
 <path d="M11.3 3 L13.8 5.5 M13.2 5 L9 9.2" fill="none" stroke="#777" stroke-width="0.9"/>
</svg>
<svg style="left:1107px;top:235px" width="15" height="16">
 <path d="M0 3.2H8.5 M11.5 3.2H14 M0 8H2.5 M5.5 8H14 M0 13.3H8.5 M11.5 13.3H14" stroke="#777" stroke-width="1"/>
 <rect x="8.5" y="1.3" width="3" height="4" rx="1.3" fill="none" stroke="#777" stroke-width="1"/>
 <rect x="2.5" y="6" width="3" height="4" rx="1.3" fill="none" stroke="#777" stroke-width="1"/>
 <rect x="8.5" y="11.3" width="3" height="4" rx="1.3" fill="none" stroke="#777" stroke-width="1"/>
</svg>
<svg style="left:1107px;top:273px" width="14" height="15">
 <path d="M3 6.5 V4.5 Q3 1 6.5 1 Q10 1 10 4.5 V6.5" fill="none" stroke="#777" stroke-width="1"/>
 <rect x="1" y="6.5" width="11" height="7.5" rx="1.5" fill="none" stroke="#777" stroke-width="1"/>
 <path d="M5.8 8.8 V11 H7.5" fill="none" stroke="#777" stroke-width="0.8"/>
</svg>
<svg style="left:1107px;top:310px" width="15" height="18">
 <path d="M1 1.5V16" stroke="#777" stroke-width="1" stroke-dasharray="2.5 1.3"/>
 <path d="M3.5 2.5 Q3.5 1 5 1 H6.5 V5.5 L8.5 4.3 L10.5 5.5 V1 H12 Q13.5 1 13.5 2.5 V15 Q13.5 16.5 12 16.5 H5 Q3.5 16.5 3.5 15Z" fill="none" stroke="#777" stroke-width="1"/>
</svg>
<svg style="left:1107px;top:348px" width="14" height="17">
 <path d="M3.5 4.5 H1.5 Q1 4.5 1 5 V15.5 Q1 16 1.5 16 H8 Q8.5 16 8.5 15.5 V14" fill="none" stroke="#777" stroke-width="1"/>
 <rect x="4" y="1" width="9" height="12.5" rx="0.8" fill="none" stroke="#777" stroke-width="1"/>
 <path d="M6.3 4H10.8 M6.3 6.3H10.8 M6.3 8.6H10.8" stroke="#777" stroke-width="0.9"/>
</svg>
<svg style="left:1107px;top:387px" width="15" height="16">
 <path d="M8 2.5 H2 Q1 2.5 1 3.5 V13.5 Q1 14.5 2 14.5 H12 Q13 14.5 13 13.5 V8" fill="none" stroke="#777" stroke-width="1"/>
 <path d="M5 10.5 L5.5 8 L12 1.5 Q13 0.8 13.8 1.5 Q14.5 2.3 13.8 3.2 L7.5 9.8Z" fill="none" stroke="#777" stroke-width="1"/>
</svg>
<svg style="left:1106px;top:425px" width="16" height="16">
 <circle cx="8" cy="8" r="7" fill="none" stroke="#777" stroke-width="1"/>
 <path d="M5.6 6.2 Q5.6 3.8 8 3.8 Q10.4 3.8 10.4 6 Q10.4 7.3 8.8 8 Q8 8.4 8 9.8" fill="none" stroke="#777" stroke-width="1"/>
 <circle cx="8" cy="11.8" r="0.7" fill="#777"/>
</svg>

<svg style="left:1140px;top:365px" width="250" height="225" viewBox="0 0 917 825">
 <g stroke="#efefef" stroke-linecap="round" fill="none">
  <path d="M259 53 L330 130" stroke-width="30"/>
  <path d="M169 131 L262 212" stroke-width="70"/>
  <path d="M64 265 L165 332" stroke-width="90"/>
  <path d="M869 483 L790 450" stroke-width="29"/>
  <path d="M835 582 L740 535" stroke-width="80"/>
  <path d="M773 742 L690 676" stroke-width="90"/>
 </g>
 <circle cx="458" cy="426" r="364" fill="#efefef"/>
 <g stroke="#fff" stroke-linecap="round" fill="none">
  <path d="M170 40 L266 130" stroke-width="44"/>
  <path d="M60 150 L168 252" stroke-width="40"/>
  <path d="M811 507 L930 560" stroke-width="50"/>
  <path d="M763 635 L930 710" stroke-width="62"/>
 </g>
 <g fill="none" stroke="#bcd6ef" stroke-width="5" stroke-linecap="round">
  <circle cx="337" cy="57" r="12"/>
  <path d="M473 33V57 M461 45H485"/>
  <path d="M215 113V137 M203 125H227"/>
  <path d="M628 60V75 M628 105V120 M598 90H613 M643 90H658 M607 69L617 79 M639 101L649 111 M649 69L639 79 M607 111L617 101"/>
  <circle cx="797" cy="150" r="15"/>
  <path d="M137 228 L145 240 L160 238 L152 252 L158 266 L143 262 L130 270 L130 255 L117 246 L132 240Z" stroke-linejoin="round"/>
  <circle cx="105" cy="356" r="10"/>
  <path d="M95 455V468 M95 482V495 M75 475H85 M103 475H116" stroke-width="4"/>
  <circle cx="126" cy="568" r="10"/>
  <path d="M740 275L760 295 M760 275L740 295"/>
  <path d="M805 378 L813 390 L828 390 L820 403 L825 418 L810 413 L797 422 L796 407 L783 398 L798 392Z" stroke-linejoin="round"/>
  <path d="M750 495V521 M737 508H763"/>
  <path d="M128 733H635 M660 733H728 M193 768H408 M440 768H497 M530 768H672 M240 802H530 M567 802H622"/>
 </g>
 <g stroke="#8cbadf" stroke-width="11" stroke-linecap="round" stroke-linejoin="round">
  <path d="M660 250 Q690 255 695 290 L708 440 Q708 460 690 460 L660 460" fill="none"/>
  <path d="M628 137 L660 145 Q668 148 666 160 L640 380 Q635 392 622 390 L596 385 Z" fill="#fff"/>
  <rect x="520" y="445" width="92" height="18" rx="9" fill="#dcdcdc"/>
  <path d="M345 470 H738" stroke-width="14" fill="none"/>
  <circle cx="327" cy="248" r="55" fill="#bdd7f0"/>
  <path d="M335 332 L405 422 L487 422 L478 462 L348 462 L348 522 L420 522 Q468 522 490 565 L538 722 L495 722 L428 598 L302 598 Q247 598 247 540 L247 385 Q247 332 297 332 Z" fill="#bdd7f0"/>
  <path d="M312 410 L358 460" fill="none"/>
  <path d="M207 372 V565 Q207 635 300 635 H368" fill="none"/>
  <path d="M307 640 V724" fill="none"/>
  <path d="M214 502 H293 L315 540" fill="none"/>
 </g>
</svg>
<div class="t" style="left:1201px;top:606px;font-size:13px;color:#777;letter-spacing:3.3px">开始工作吧,加油!</div>

<!-- STATUS BAR -->
<div class="a" style="left:0;top:804px;width:1396px;height:21px;background:#e6e6e6;border-top:1px solid #c6c6c6"></div>
<div class="a" style="left:0;top:823px;width:1396px;height:1px;background:#f0f0f0"></div>
<div class="a" style="left:0;top:824px;width:1396px;height:1px;background:#2e3742"></div>
<div class="a" style="left:1395px;top:0;width:1px;height:825px;background:#141414"></div>
<div class="t st" style="left:33px">1 页</div>
<div class="t st" style="left:89px">1 节</div>
<div class="t st" style="left:154px">1/1</div>
<div class="t st" style="left:222px">字数: 0</div>
<div class="t st" style="left:285px">位置 : 2.57 厘米</div>
<div class="t st" style="left:430px">1 行</div>
<div class="t st" style="left:482px">1 列</div>
<div class="t st" style="left:534px">改写</div>
<div class="t st" style="left:572px">修订</div>
<div class="t st" style="left:619px">拼写检查</div>
<div class="a" style="left:1145px;top:804px;width:20px;height:21px;background:#bcd6ee"></div>
<svg style="left:1149px;top:808px" width="12" height="12"><rect x="0.5" y="0.5" width="10.5" height="10.5" fill="none" stroke="#555" stroke-width="1"/><path d="M2.5 2.6H9 M2.5 4.5H9 M2.5 6.4H9 M2.5 8.3H9" stroke="#555" stroke-width="0.9"/></svg>
<svg style="left:1169px;top:808px" width="12" height="12"><rect x="0.5" y="0.5" width="10.5" height="10.5" fill="none" stroke="#555" stroke-width="1"/><path d="M2.5 2.6H4 M5 2.6H9 M3.5 4.5H4.5 M5.5 4.5H9 M3.5 6.4H4.5 M5.5 6.4H9 M2.5 8.3H4 M5 8.3H9" stroke="#555" stroke-width="0.9"/></svg>
<div class="t" style="left:1219px;top:808px;font-size:12.5px;color:#444">100%</div>
<div class="a" style="left:1261px;top:814px;width:8px;height:2px;background:#444"></div>
<div class="a" style="left:1274px;top:814px;width:101px;height:1px;background:#666"></div>
<div class="a" style="left:1323px;top:809px;width:4.5px;height:11px;background:#555"></div>
<svg style="left:1381px;top:809px" width="11" height="11"><path d="M5.5 0V11 M0 5.5H11" stroke="#444" stroke-width="2"/></svg>
</body></html>
